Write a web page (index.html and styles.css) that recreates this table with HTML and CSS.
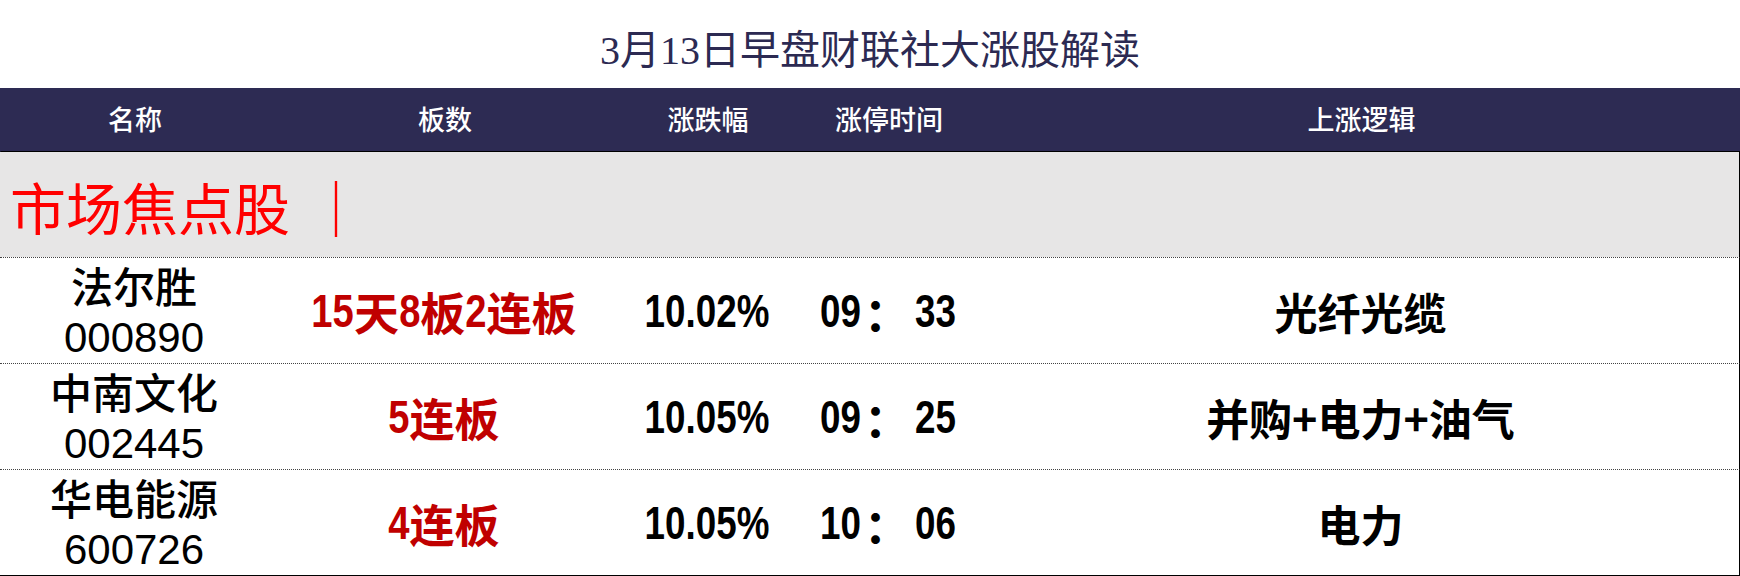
FILE: index.html
```html
<!DOCTYPE html>
<html lang="zh">
<head>
<meta charset="utf-8">
<title>3月13日早盘财联社大涨股解读</title>
<link rel="stylesheet" href="styles.css">
</head>
<body>
<div class="page">
  <h1 class="title">3月13日早盘财联社大涨股解读</h1>
  <div class="table">
    <div class="head">
      <div class="hc">名称</div>
      <div class="hc">板数</div>
      <div class="hc">涨跌幅</div>
      <div class="hc">涨停时间</div>
      <div class="hc">上涨逻辑</div>
    </div>
    <div class="section">
      <span class="section-name">市场焦点股</span><span class="section-bar">｜</span>
    </div>
    <div class="row">
      <div class="c name"><span class="cn">法尔胜</span><span class="code">000890</span></div>
      <div class="c board"><span class="n2">15</span>天<span class="n1">8</span>板<span class="n1">2</span>连板</div>
      <div class="c pct"><span class="nar">10.02%</span></div>
      <div class="c time"><span class="n2">09</span><span class="colon">：</span><span class="n2">33</span></div>
      <div class="c logic">光纤光缆</div>
    </div>
    <div class="row">
      <div class="c name"><span class="cn">中南文化</span><span class="code">002445</span></div>
      <div class="c board"><span class="n1">5</span>连板</div>
      <div class="c pct"><span class="nar">10.05%</span></div>
      <div class="c time"><span class="n2">09</span><span class="colon">：</span><span class="n2">25</span></div>
      <div class="c logic">并购+电力+油气</div>
    </div>
    <div class="row last">
      <div class="c name"><span class="cn">华电能源</span><span class="code">600726</span></div>
      <div class="c board"><span class="n1">4</span>连板</div>
      <div class="c pct"><span class="nar">10.05%</span></div>
      <div class="c time"><span class="n2">10</span><span class="colon">：</span><span class="n2">06</span></div>
      <div class="c logic">电力</div>
    </div>
  </div>
</div>
</body>
</html>
```

FILE: styles.css
```css
* { box-sizing: border-box; margin: 0; padding: 0; }
html, body { background: #ffffff; }
body { width: 1740px; height: 576px; overflow: hidden; }

.page { width: 1740px; }

.title {
  height: 88px;
  display: flex;
  align-items: center;
  justify-content: center;
  padding-top: 6px;
  font-family: "Liberation Serif", "Noto Sans CJK SC", serif;
  font-weight: normal;
  font-size: 40px;
  color: #2c2a52;
}

.table { width: 1740px; }

.head, .row {
  display: grid;
  grid-template-columns: 268px 352px 174px 188px 1fr;
}

.head {
  height: 64px;
  background: #2d2b53;
  border-bottom: 1px solid #000;
  border-left: 1px solid #2d2b53;
}
.hc {
  display: flex;
  align-items: center;
  justify-content: center;
  color: #ffffff;
  font-family: "Noto Sans CJK SC", sans-serif;
  font-weight: 500;
  font-size: 27px;
  padding-bottom: 2px;
}

.section {
  height: 105px;
  background: #e7e6e6;
  border-right: 1px solid #000;
  display: flex;
  align-items: center;
  padding-left: 10px;
  padding-top: 1px;
  color: #ff0000;
  font-family: "Noto Sans CJK SC", serif;
  font-size: 56px;
}
.section-bar { margin-left: 18px; }

.row {
  height: 106px;
  border-top: 1px dotted #444;
  border-right: 1px solid #000;
}
.row.last { height: 107px; border-bottom: 1px solid #000; }

.c {
  display: flex;
  align-items: center;
  justify-content: center;
  font-size: 44px;
  color: #000;
  white-space: nowrap;
}
.name {
  flex-direction: column;
  line-height: 53px;
  font-family: "Liberation Sans", "Noto Sans CJK SC", sans-serif;
}
.name .cn { font-weight: 500; font-family: "Noto Sans CJK SC", sans-serif; font-size: 42px; }
.name .code { font-size: 42px; }

.board {
  color: #c00000;
  font-weight: bold;
  font-family: "Noto Sans CJK SC", sans-serif;
  font-size: 45px;
}
.pct, .time {
  font-weight: bold;
  font-family: "Liberation Sans", "Noto Sans CJK SC", sans-serif;
  font-size: 46px;
}

/* narrow (Arial Narrow-like) digits */
.nar, .n1, .n2 {
  display: inline-block;
  font-family: "Liberation Sans", sans-serif;
  font-weight: bold;
  font-size: 46px;
  transform: scaleX(0.8);
}
.board .n1, .board .n2 { transform: scaleX(0.83); }
.n1 { margin: 0 -2.2px; }
.n2 { margin: 0 -4.4px; }
.colon {
  font-family: "Noto Sans CJK SC", sans-serif;
  font-weight: bold;
  font-size: 46px;
  margin: 0 4px 0 2px;
}

.logic {
  font-weight: bold;
  font-family: "Noto Sans CJK SC", sans-serif;
  font-size: 43px;
}
```
